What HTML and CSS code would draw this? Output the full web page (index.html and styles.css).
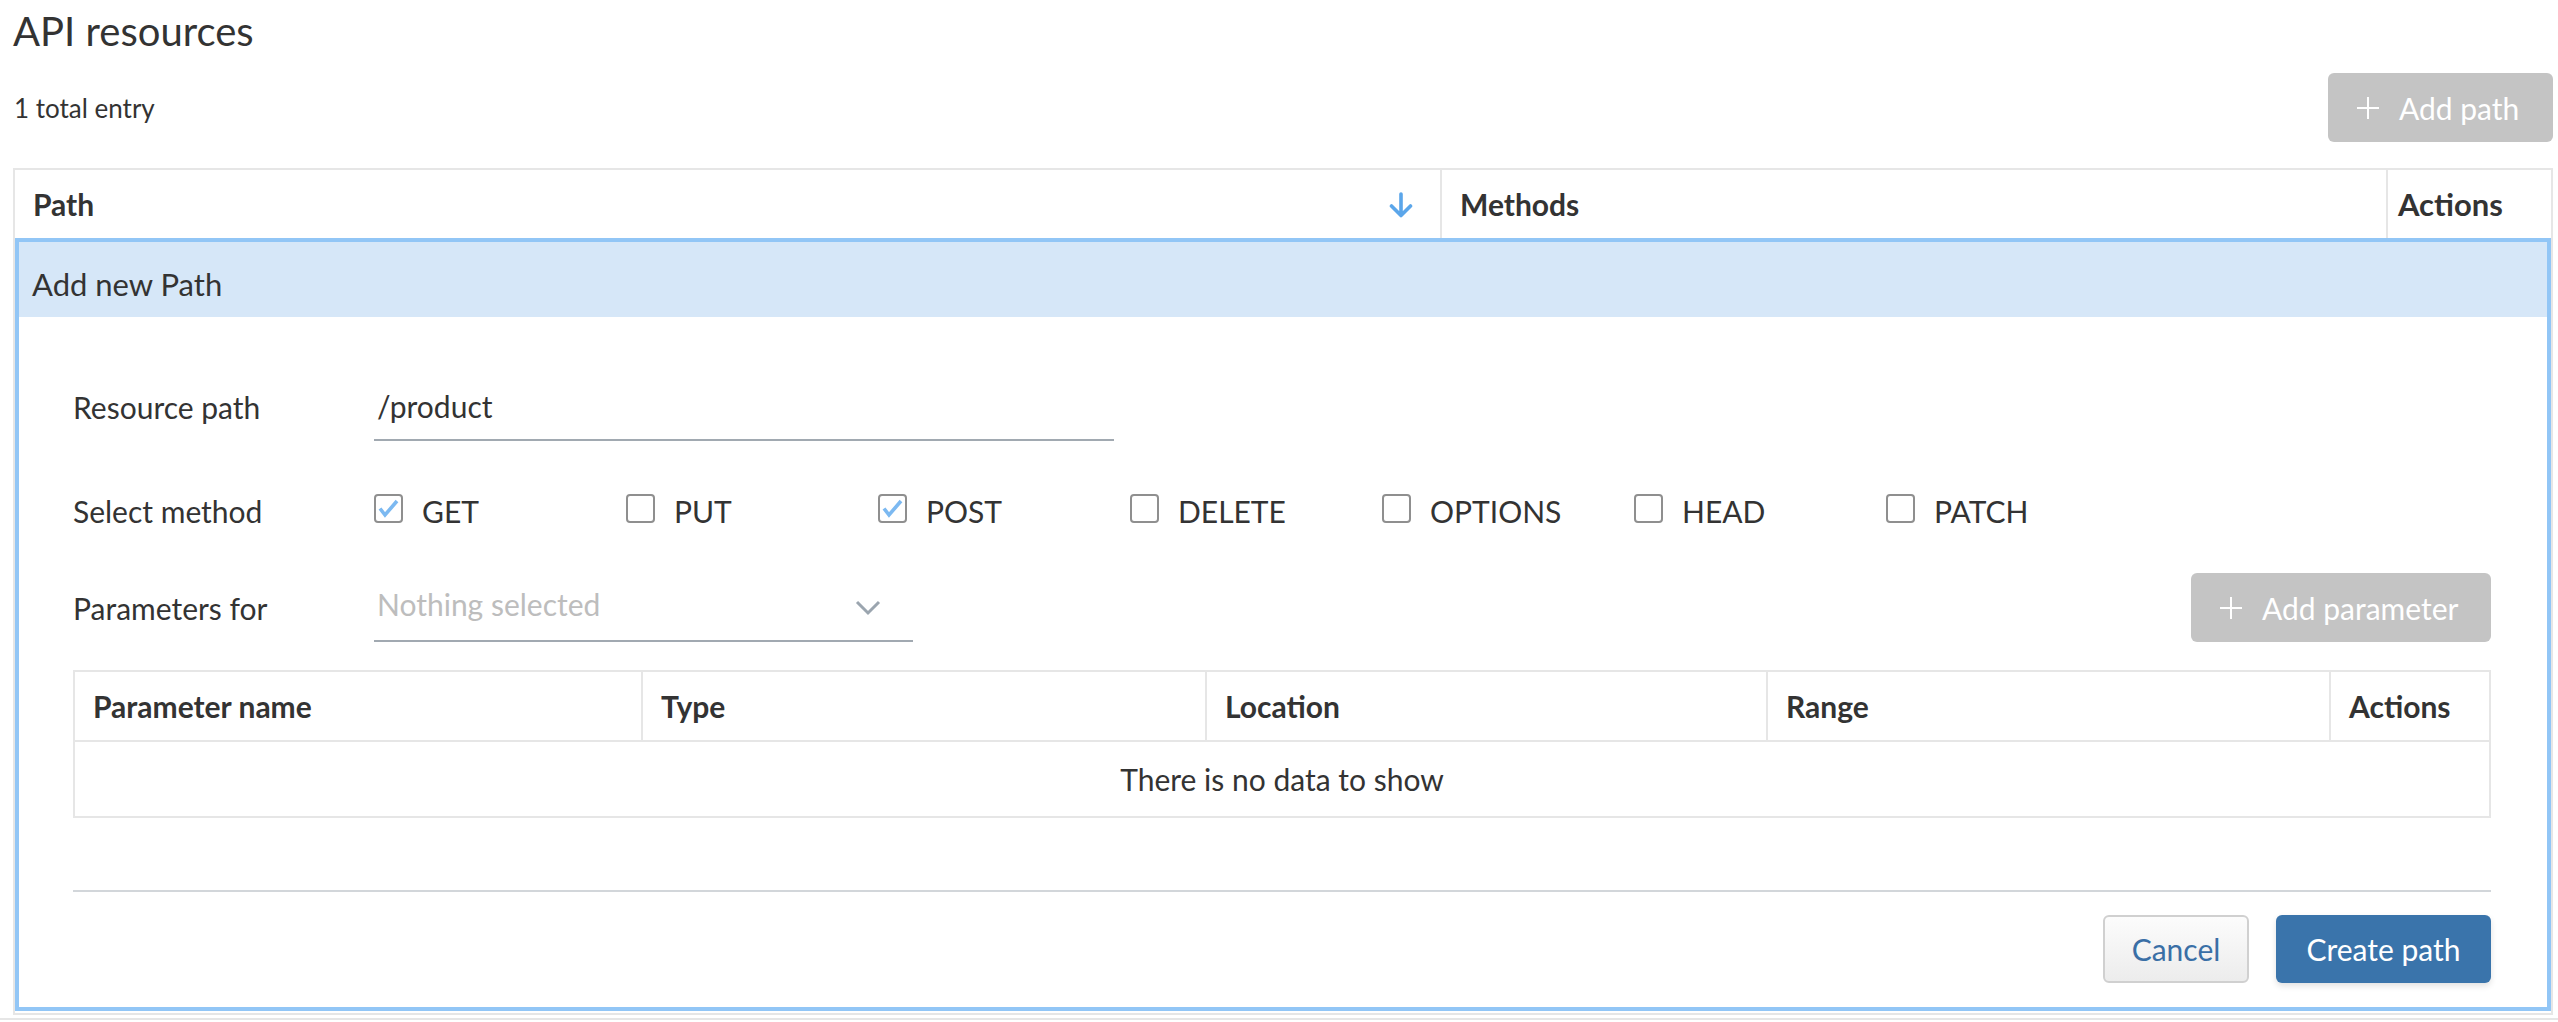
FILE: index.html
```html
<!DOCTYPE html>
<html lang="en">
<head>
<meta charset="utf-8">
<title>API resources</title>
<link rel="stylesheet" href="styles.css">
</head>
<body>
<div class="page">
  <h1 class="title">API resources</h1>
  <div class="toolbar">
    <span class="count">1 total entry</span>
    <button class="btn btn-disabled btn-add-path" type="button">
      <svg class="plus" viewBox="0 0 24 24" width="24" height="24"><path d="M12 1v22M1 12h22" stroke="#fff" stroke-width="2" fill="none"/></svg>
      <span>Add path</span>
    </button>
  </div>

  <div class="outer-table">
    <div class="outer-head">
      <div class="oh-cell oh-path">
        <span>Path</span>
        <svg class="sort" viewBox="0 0 26 26" width="26" height="26"><path d="M13 2v21M3.5 14L13 23.5L22.5 14" stroke="#5ba6ea" stroke-width="3.6" fill="none" stroke-linecap="round" stroke-linejoin="round"/></svg>
      </div>
      <div class="oh-cell oh-methods">Methods</div>
      <div class="oh-cell oh-actions">Actions</div>
    </div>

    <div class="expanded">
      <div class="exp-head">Add new Path</div>
      <div class="form">
        <div class="form-row row-path">
          <label class="form-label">Resource path</label>
          <div class="text-input">/product</div>
        </div>
        <div class="form-row row-methods">
          <span class="form-label">Select method</span>
          <div class="methods">
            <label class="method"><span class="cb checked"><svg viewBox="0 0 25 25" width="25" height="25"><path d="M4 12.5l5 6.5L21 5" stroke="#7cb9f1" stroke-width="3.6" fill="none"/></svg></span>GET</label>
            <label class="method"><span class="cb"></span>PUT</label>
            <label class="method"><span class="cb checked"><svg viewBox="0 0 25 25" width="25" height="25"><path d="M4 12.5l5 6.5L21 5" stroke="#7cb9f1" stroke-width="3.6" fill="none"/></svg></span>POST</label>
            <label class="method"><span class="cb"></span>DELETE</label>
            <label class="method"><span class="cb"></span>OPTIONS</label>
            <label class="method"><span class="cb"></span>HEAD</label>
            <label class="method"><span class="cb"></span>PATCH</label>
          </div>
        </div>
        <div class="form-row row-params">
          <span class="form-label">Parameters for</span>
          <div class="select">
            <span class="placeholder">Nothing selected</span>
            <svg class="chev" viewBox="0 0 26 16" width="26" height="16"><path d="M2 2l11 11L24 2" stroke="#9ba5af" stroke-width="3" fill="none"/></svg>
          </div>
          <button class="btn btn-disabled btn-add-param" type="button">
            <svg class="plus" viewBox="0 0 24 24" width="24" height="24"><path d="M12 1v22M1 12h22" stroke="#fff" stroke-width="2" fill="none"/></svg>
            <span>Add parameter</span>
          </button>
        </div>

        <div class="param-table">
          <div class="pt-head">
            <div class="pt-cell">Parameter name</div>
            <div class="pt-cell">Type</div>
            <div class="pt-cell">Location</div>
            <div class="pt-cell">Range</div>
            <div class="pt-cell">Actions</div>
          </div>
          <div class="pt-empty">There is no data to show</div>
        </div>

        <div class="form-actions">
          <button class="btn btn-cancel" type="button">Cancel</button>
          <button class="btn btn-primary" type="button">Create path</button>
        </div>
      </div>
    </div>
  </div>
  <div class="page-rule"></div>
</div>
</body>
</html>
```

FILE: styles.css
```css
* { box-sizing: border-box; }

html, body {
  margin: 0;
  padding: 0;
  background: #fff;
}

body {
  font-family: Lato, "Open Sans", "Liberation Sans", sans-serif;
  color: #333;
  font-size: 30px;
}

.page {
  padding: 0 5px 0 13px;
}

.title {
  margin: 0;
  padding-top: 7px;
  font-size: 40px;
  font-weight: 400;
  line-height: 48px;
  color: #333;
}

.toolbar {
  display: flex;
  align-items: center;
  justify-content: space-between;
  margin-top: 18px;
  height: 69px;
}

.count {
  font-size: 26px;
  padding-left: 1px;
}

.btn {
  font-family: inherit;
  font-size: 30px;
  border-radius: 6px;
  display: inline-flex;
  align-items: center;
  cursor: pointer;
  line-height: 1;
}

.btn-disabled {
  background: #c4c4c4;
  color: #fff;
  border: 0;
}

.btn-add-path {
  height: 69px;
  width: 225px;
  padding: 0 0 0 28px;
  gap: 19px;
}

.plus { flex: none; }

.outer-table {
  margin-top: 26px;
  border: 2px solid #e6e6e6;
}

.outer-head {
  display: grid;
  grid-template-columns: 1425px 946px 1fr;
  height: 68px;
}

.oh-cell {
  display: flex;
  align-items: center;
  font-weight: 700;
  padding: 0 18px;
  border-left: 2px solid #e6e6e6;
}

.oh-cell:first-child { border-left: 0; }

.oh-path {
  justify-content: space-between;
  padding-right: 26px;
}

.oh-methods { padding-left: 18px; }
.oh-actions { padding-left: 10px; font-size: 31px; }

.sort { margin-top: 2px; }

.expanded {
  border: 4px solid #92c6f6;
  margin-bottom: 2px;
}

.exp-head {
  background: #d6e7f8;
  height: 75px;
  display: flex;
  align-items: center;
  padding: 8px 0 0 13px;
  font-size: 31px;
}

.form {
  padding: 62px 56px 24px 54px;
}

.form-row {
  display: flex;
  align-items: center;
}

.form-label {
  width: 301px;
  flex: none;
}

.row-path {
  height: 62px;
}

.row-path .form-label { margin-top: -6px; }

.text-input {
  width: 740px;
  height: 62px;
  border-bottom: 2px solid #a1a9b1;
  display: flex;
  align-items: center;
  padding: 0 0 6px 3px;
}

.row-methods {
  margin-top: 40px;
  height: 60px;
}

.methods {
  display: flex;
}

.method {
  width: 252px;
  display: flex;
  align-items: center;
  gap: 19px;
}

.cb {
  width: 29px;
  height: 29px;
  border: 2px solid #8f8f8f;
  border-radius: 4px;
  display: inline-flex;
  align-items: center;
  justify-content: center;
  flex: none;
  margin-top: -6px;
}

.row-params {
  margin-top: 32px;
  height: 69px;
}

.select {
  width: 539px;
  height: 69px;
  border-bottom: 2px solid #a1a9b1;
  display: flex;
  align-items: center;
  justify-content: space-between;
  padding: 0 32px 6px 3px;
}

.placeholder { color: #bdbdbd; }

.chev { margin-top: 8px; }

.btn-add-param {
  margin-left: auto;
  height: 69px;
  width: 300px;
  padding: 0 0 0 28px;
  gap: 19px;
}

.param-table {
  margin-top: 28px;
  border: 2px solid #e6e6e6;
}

.pt-head {
  display: grid;
  grid-template-columns: 566px 564px 561px 563px 1fr;
  height: 70px;
  border-bottom: 2px solid #e6e6e6;
}

.pt-cell {
  display: flex;
  align-items: center;
  font-weight: 700;
  padding: 0 18px;
  border-left: 2px solid #e6e6e6;
}

.pt-cell:first-child { border-left: 0; }

.pt-empty {
  height: 74px;
  display: flex;
  align-items: center;
  justify-content: center;
}

.form-actions {
  margin-top: 72px;
  border-top: 2px solid #d2d6da;
  padding-top: 23px;
  display: flex;
  justify-content: flex-end;
  gap: 27px;
}

.btn-cancel {
  height: 68px;
  width: 146px;
  justify-content: center;
  background: linear-gradient(#fcfcfc, #ececec);
  border: 2px solid #d0d0d0;
  color: #3a6fa6;
}

.btn-primary {
  height: 68px;
  width: 215px;
  justify-content: center;
  background: #3a74ab;
  border: 0;
  color: #fff;
  box-shadow: 0 3px 6px rgba(0, 0, 0, 0.12);
}

.page-rule {
  margin: 3px -5px 0 -13px;
  border-top: 2px solid #e6e6e6;
}
```
